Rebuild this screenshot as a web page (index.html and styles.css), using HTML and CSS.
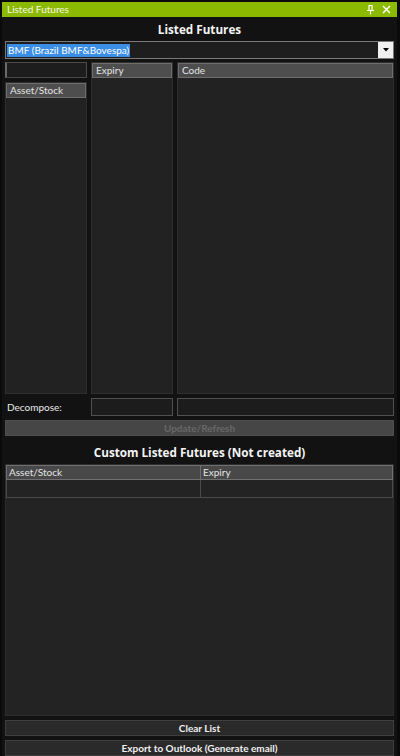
FILE: index.html
```html
<!DOCTYPE html>
<html>
<head>
<meta charset="utf-8">
<link rel="stylesheet" href="styles.css">
</head>
<body>
<div class="window">
  <div class="titlebar">
    <span class="title">Listed Futures</span>
    <span class="tb-icons">
      <svg width="9" height="10" viewBox="0 0 9 10"><path d="M2.5 0.5h4M3 0.5v5M6 0.5v5M1 5.5h7M4.5 5.5v4" stroke="#fff" stroke-width="1.2" fill="none"/></svg>
      <svg width="9" height="9" viewBox="0 0 9 9"><path d="M1 1l7 7M8 1l-7 7" stroke="#fff" stroke-width="1.4" fill="none"/></svg>
    </span>
  </div>
  <div class="content">
    <h1 class="heading">Listed Futures</h1>
    <div class="select">
      <span class="select-text"><span class="sel">BMF (Brazil BMF&amp;Bovespa)</span></span>
      <span class="select-btn"><svg width="6" height="4" viewBox="0 0 6 4"><path d="M0 0h6L3 3.5z" fill="#000"/></svg></span>
    </div>
    <div class="cols">
      <div class="col col-left">
        <div class="input filter"></div>
        <div class="panel">
          <div class="hdr">Asset/Stock</div>
        </div>
      </div>
      <div class="panel col-mid">
        <div class="hdr">Expiry</div>
      </div>
      <div class="panel col-right">
        <div class="hdr">Code</div>
      </div>
    </div>
    <div class="decompose">
      <span class="label">Decompose:</span>
      <div class="input dec-mid"></div>
      <div class="input dec-right"></div>
    </div>
    <div class="btn disabled">Update/Refresh</div>
    <h2 class="heading heading2">Custom Listed Futures (Not created)</h2>
    <div class="table">
      <div class="trow thead">
        <div class="cell c1">Asset/Stock</div>
        <div class="cell c2">Expiry</div>
      </div>
      <div class="trow tbody">
        <div class="cell c1"></div>
        <div class="cell c2"></div>
      </div>
    </div>
    <div class="btn bold">Clear List</div>
    <div class="btn bold last">Export to Outlook (Generate email)</div>
  </div>
</div>
</body>
</html>
```
FILE: styles.css
```css
* { box-sizing: border-box; }
html, body { margin: 0; padding: 0; background: #0c0c0c; }
body {
  font-family: Lato, "Open Sans", sans-serif;
  font-size: 10px;
  color: #e8e8e8;
  width: 400px;
  height: 756px;
  overflow: hidden;
}
.window {
  width: 400px;
  height: 756px;
  border: 2px solid #0a0a0a;
  border-bottom: none;
  border-right-width: 3px;
  background: #121212;
  display: flex;
  flex-direction: column;
}
.titlebar {
  height: 15px;
  background: #8cba00;
  display: flex;
  align-items: center;
  justify-content: space-between;
  padding: 0 6px 0 5px;
  flex: none;
}
.title { color: #f4f8e8; font-size: 10px; line-height: 15px; }
.tb-icons { display: flex; gap: 7px; align-items: center; }
.tb-icons svg { display: block; }
.content {
  flex: 1;
  display: flex;
  flex-direction: column;
  padding: 0 3px 0 3px;
}
.heading {
  margin: 0;
  font-family: "Open Sans", sans-serif;
  font-size: 11.7px;
  font-weight: 700;
  color: #f4f4f4;
  text-align: center;
  line-height: 24px;
  height: 24px;
  flex: none;
}
.select {
  height: 18px;
  display: flex;
  border: 1px solid #7a7a7a;
  background: #1e1e1e;
  flex: none;
}
.select-text { flex: 1; padding: 1px 1px; display: flex; align-items: center; }
.sel { background: #3a8ee6; color: #fff; padding: 0 1px; line-height: 13px; font-size: 10px; }
.select-btn {
  width: 15px;
  background: #f0f0f0;
  display: flex;
  align-items: center;
  justify-content: center;
}
.cols {
  display: flex;
  gap: 4px;
  margin-top: 3px;
  height: 332px;
  flex: none;
}
.col-left { width: 82px; display: flex; flex-direction: column; gap: 4px; }
.col-left .panel { flex: 1; }
.col-mid { width: 82px; }
.col-right { flex: 1; }
.panel {
  background: #222222;
  border: 1px solid #2e2e2e;
}
.hdr {
  height: 15px;
  background: #4e4e4e;
  border: 1px solid #6e6e6e;
  color: #e4e4e4;
  padding-left: 3px;
  line-height: 13px;
  font-size: 10px;
}
.input {
  height: 16px;
  background: #1d1d1d;
  border: 1px solid #4a4a4a;
}
.filter { border-left: 2px solid #6a6a6a; flex: none; }
.decompose {
  display: flex;
  align-items: center;
  gap: 4px;
  margin-top: 4px;
  height: 18px;
  flex: none;
}
.label { width: 82px; padding-left: 2px; color: #eaeaea; font-size: 10px; }
.dec-mid { width: 82px; height: 18px; border-color: #505050; background: #1c1c1c; }
.dec-right { flex: 1; height: 18px; border-color: #505050; background: #1c1c1c; }
.btn {
  height: 16px;
  margin-top: 4px;
  background: #2a2a2a;
  border: 1px solid #3e3e3e;
  text-align: center;
  line-height: 14px;
  font-size: 10px;
  flex: none;
  color: #f0f0f0;
}
.btn.disabled { background: #464646; border-color: #4e4e4e; color: #686868; font-weight: 700; }
.btn.bold { font-weight: 700; }
.heading2 { margin-top: 4px; }
.table {
  flex: 1;
  background: #232323;
  border: 1px solid #2c2c2c;
}
.trow { display: flex; }
.thead { height: 15px; background: #484848; }
.thead .cell { border: 1px solid #707070; line-height: 13px; padding-left: 2px; color: #e4e4e4; }
.thead .c2 { border-left: none; }
.tbody { height: 18px; }
.tbody .cell { border: 1px solid #4a4a4a; border-top: none; }
.tbody .c2 { border-left: none; }
.c1 { width: 195px; }
.c2 { flex: 1; }
```
